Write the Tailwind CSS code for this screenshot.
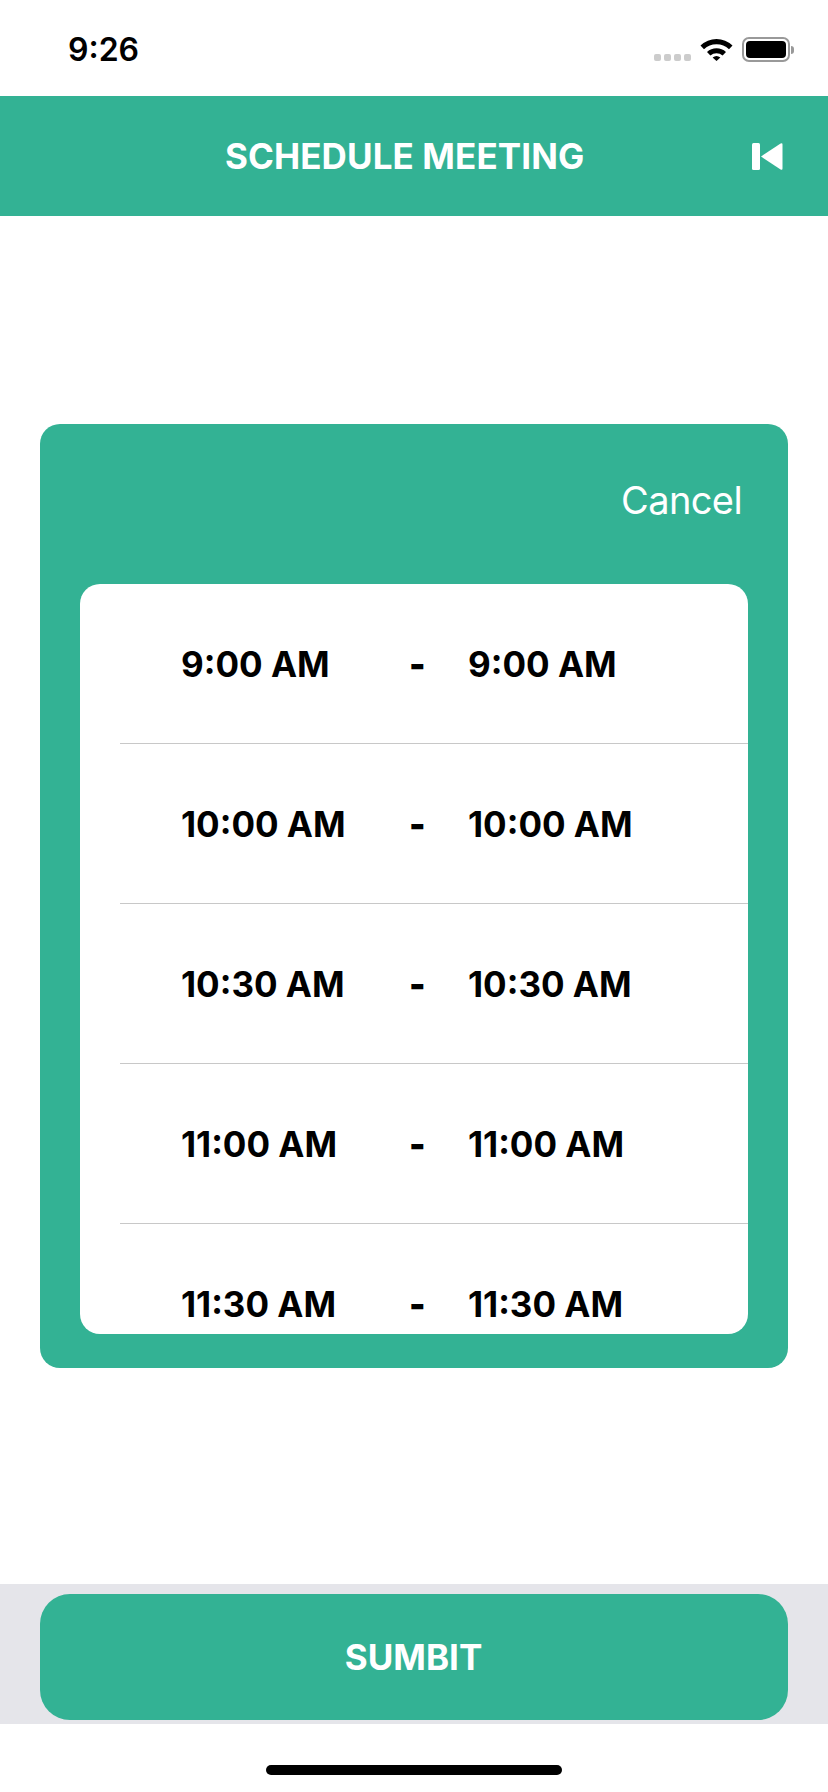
<!DOCTYPE html>
<html>
<head>
<meta charset="utf-8">
<script src="https://cdn.jsdelivr.net/npm/@tailwindcss/browser@4"></script>
</head>
<body class="m-0 bg-white">
<div class="w-[828px] h-[1792px] bg-white flex flex-col overflow-hidden font-['Inter','Liberation_Sans',sans-serif]">
  <div class="h-[96px] shrink-0 flex items-start justify-between pl-[68px] pr-[34px] pt-[32px]">
    <span class="text-[32px] leading-[36px] font-semibold text-black">9:26</span>
    <div class="flex items-start pt-[5px]">
      <div class="flex gap-[2.5px] mt-[17px] mr-[9px]">
        <span class="w-[7.5px] h-[7px] rounded-[2px] bg-[#cccccc]"></span>
        <span class="w-[7.5px] h-[7px] rounded-[2px] bg-[#cccccc]"></span>
        <span class="w-[7.5px] h-[7px] rounded-[2px] bg-[#cccccc]"></span>
        <span class="w-[7.5px] h-[7px] rounded-[2px] bg-[#cccccc]"></span>
      </div>
      <svg class="w-[33px] h-[24px] mr-[9px]" viewBox="0 0 33 24">
        <path d="M0.5 8.5 A23 23 0 0 1 32.5 8.5 L29 12.3 A18 18 0 0 0 4 12.3 Z" fill="#000"/>
        <path d="M7 15 A14 14 0 0 1 26 15 L22.6 18.4 A9.5 9.5 0 0 0 10.4 18.4 Z" fill="#000"/>
        <path d="M12.6 20.6 A6 6 0 0 1 20.4 20.6 L16.5 24 Z" fill="#000"/>
      </svg>
      <div class="flex items-center">
        <div class="w-[48px] h-[25px] rounded-[7px] border-[2px] border-[#999999] p-[2px] flex">
          <div class="flex-1 bg-black rounded-[4px]"></div>
        </div>
        <div class="w-[3px] h-[8px] ml-[1px] rounded-r-[3px] bg-[#999999]"></div>
      </div>
    </div>
  </div>

  <div class="h-[120px] shrink-0 bg-[#33b294] relative flex items-center">
    <span class="ml-[225px] text-[35px] leading-[40px] font-bold text-white tracking-[0.1px]">SCHEDULE MEETING</span>
    <svg class="absolute left-[752px] top-[47px] w-[31px] h-[27px]" viewBox="0 0 31 27">
      <rect x="0" y="0" width="8" height="27" rx="1.5" fill="#fff"/>
      <path d="M30.5 1.5 V25.5 Q30.5 27.3 28.6 26.4 L9 13.5 L28.6 0.6 Q30.5 -0.3 30.5 1.5 Z" fill="#fff"/>
    </svg>
  </div>

  <div class="h-[208px] shrink-0"></div>

  <div class="mx-[40px] h-[944px] shrink-0 bg-[#33b294] rounded-[20px] flex flex-col px-[40px] pb-[34px]">
    <div class="h-[160px] shrink-0 flex items-center justify-end pr-[6px] pb-[8px]">
      <span class="text-[38px] leading-[46px] text-white font-normal tracking-[-0.6px]">Cancel</span>
    </div>
    <div class="flex-1 bg-white rounded-[20px] overflow-hidden">
      <div class="ml-[40px] h-[160px] pt-[2px] flex items-center border-b border-[#c8c8c8] text-[35px] font-[650] text-black">
        <span class="ml-[61px] w-[228px]">9:00 AM</span><span class="w-[59px] font-black">-</span><span>9:00 AM</span>
      </div>
      <div class="ml-[40px] h-[160px] pt-[2px] flex items-center border-b border-[#c8c8c8] text-[35px] font-[650] text-black">
        <span class="ml-[61px] w-[228px]">10:00 AM</span><span class="w-[59px] font-black">-</span><span>10:00 AM</span>
      </div>
      <div class="ml-[40px] h-[160px] pt-[2px] flex items-center border-b border-[#c8c8c8] text-[35px] font-[650] text-black">
        <span class="ml-[61px] w-[228px]">10:30 AM</span><span class="w-[59px] font-black">-</span><span>10:30 AM</span>
      </div>
      <div class="ml-[40px] h-[160px] pt-[2px] flex items-center border-b border-[#c8c8c8] text-[35px] font-[650] text-black">
        <span class="ml-[61px] w-[228px]">11:00 AM</span><span class="w-[59px] font-black">-</span><span>11:00 AM</span>
      </div>
      <div class="ml-[40px] h-[160px] pt-[2px] flex items-center border-b border-[#c8c8c8] text-[35px] font-[650] text-black">
        <span class="ml-[61px] w-[228px]">11:30 AM</span><span class="w-[59px] font-black">-</span><span>11:30 AM</span>
      </div>
    </div>
  </div>

  <div class="h-[216px] shrink-0"></div>

  <div class="h-[140px] shrink-0 bg-[#e5e5ea] px-[40px] pt-[10px]">
    <div class="h-[126px] bg-[#33b294] rounded-[30px] flex items-center justify-center pr-[1px]">
      <span class="text-[35px] font-bold text-white">SUMBIT</span>
    </div>
  </div>

  <div class="flex-1 flex justify-center pt-[41px]">
    <div class="w-[296px] h-[10px] rounded-full bg-black"></div>
  </div>
</div>
</body>
</html>
